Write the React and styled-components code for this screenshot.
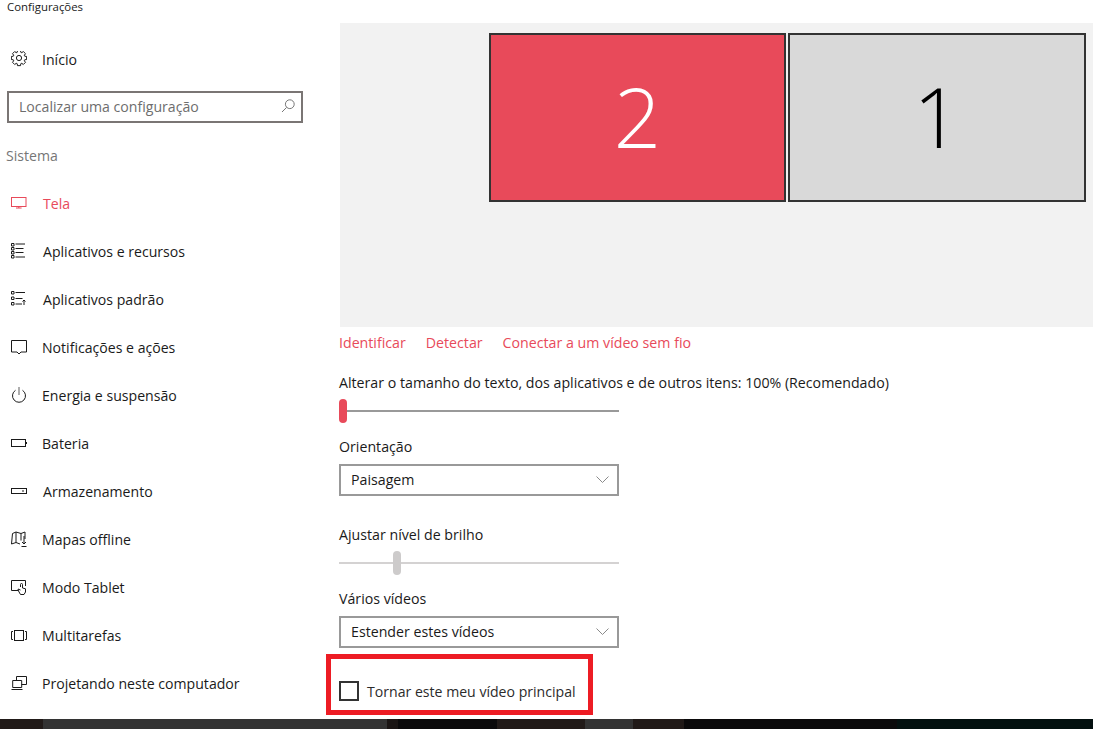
import React from "react";
import styled, { createGlobalStyle } from "styled-components";

const Global = createGlobalStyle`
  html, body { margin: 0; padding: 0; height: 100%; background: #fff; overflow: hidden; }
  #root { height: 100%; }
  * { box-sizing: border-box; }
`;

const Page = styled.div`
  position: relative;
  width: 1093px;
  height: 729px;
  display: flex;
  flex-direction: column;
  font-family: "Open Sans", "Liberation Sans", sans-serif;
  font-size: 14.2px;
  color: #1a1a1a;
  overflow: hidden;
`;
const Body = styled.div`
  flex: 1;
  min-height: 0;
  display: grid;
  grid-template-columns: 339px 1fr;
`;
const Sidebar = styled.aside`
  display: flex;
  flex-direction: column;
  font-size: 14.1px;
`;
const WinTitle = styled.div`
  font-size: 11.4px;
  line-height: 14px;
  padding-left: 7px;
  height: 35px;
`;
const NavRow = styled.div`
  height: 48px;
  display: flex;
  align-items: center;
  padding-left: 11px;
  gap: 15px;
  color: ${p => (p.$active ? "#e84a5a" : "#1a1a1a")};
  svg { flex: none; width: 16px; height: 16px; }
  span { transform: translateX(${p => p.$nudge || 0}px); }
`;
const Search = styled.div`
  margin: 8px 36px 0 7px;
  height: 32px;
  border: 2px solid #7a7574;
  display: flex;
  align-items: center;
  justify-content: space-between;
  padding: 0 5px 2px 10px;
  color: #6d6d6d;
`;
const Section = styled.div`
  padding-left: 6px;
  margin-top: 23px;
  height: 20px;
  line-height: 20px;
  color: #767676;
  margin-bottom: 13px;
`;
const Main = styled.main`
  display: flex;
  flex-direction: column;
  padding-top: 23px;
`;
const Preview = styled.div`
  margin-left: 1px;
  height: 304px;
  background: #f2f2f2;
  display: flex;
  gap: 2px;
  padding: 10px 0 0 149px;
  align-items: flex-start;
`;
const Monitor = styled.div`
  width: ${p => p.$w}px;
  height: 169px;
  padding-bottom: 4px;
  border: 2px solid #333;
  background: ${p => (p.$active ? "#e84a5a" : "#d9d9d9")};
  color: ${p => (p.$active ? "#fff" : "#000")};
  display: flex;
  align-items: center;
  justify-content: center;
  font-family: "Open Sans", "Lato", sans-serif;
  font-weight: 300;
  font-size: 83px;
  line-height: 1;
`;
const Links = styled.div`
  display: flex;
  gap: 20px;
  margin-top: 6px;
  height: 20px;
  line-height: 20px;
  color: #e84a5a;
`;
const Label = styled.div`
  height: 20px;
  line-height: 20px;
  margin-top: ${p => p.$top}px;
`;
const Slider = styled.div`
  position: relative;
  width: 280px;
  height: 24px;
  margin-top: ${p => p.$top || 0}px;
  display: flex;
  align-items: center;
  &::before {
    content: "";
    width: 100%;
    height: 2px;
    background: ${p => p.$track};
  }
`;
const Thumb = styled.div`
  position: absolute;
  left: ${p => p.$left}px;
  top: 0;
  width: 8px;
  height: 24px;
  border-radius: 4px;
  background: ${p => p.$color};
`;
const Select = styled.div`
  width: 280px;
  height: 32px;
  margin-top: ${p => p.$top || 0}px;
  padding: 0 8px 1px 10px;
  border: 2px solid #999;
  display: flex;
  align-items: center;
  justify-content: space-between;
`;
const CheckRow = styled.div`
  margin-top: 33px;
  display: flex;
  align-items: center;
  gap: 8px;
  height: 20px;
  font-size: 14.1px;
  color: #2b2b2b;
`;
const Box = styled.div`
  width: 20px;
  height: 20px;
  border: 2px solid #333;
`;
const Callout = styled.div`
  position: absolute;
  left: 326px;
  top: 654px;
  width: 267px;
  height: 61px;
  border: 5px solid #ed1c24;
`;
const Taskbar = styled.footer`
  flex: none;
  height: 10px;
  display: flex;
`;
const Slice = styled.div`
  width: ${p => p.$w}px;
  flex: ${p => (p.$w ? "none" : "1")};
  background: ${p => p.$c};
`;

const Ico = ({ children }) => (
  <svg viewBox="0 0 16 16" fill="none" stroke="currentColor" strokeWidth="1">{children}</svg>
);

const gearPath = (() => {
  const pts = [];
  const n = 8;
  for (let i = 0; i < n; i++) {
    const a = (i / n) * Math.PI * 2;
    const w = 0.2;
    const P = (r, t) => `${(8 + r * Math.cos(t)).toFixed(2)} ${(7 + r * Math.sin(t)).toFixed(2)}`;
    pts.push(`${i ? "L" : "M"}${P(6, a - w * 1.5)}`, `L${P(7.8, a - w)}`, `L${P(7.8, a + w)}`, `L${P(6, a + w * 1.5)}`);
  }
  return pts.join(" ") + " Z";
})();

const icons = {
  gear: <Ico><path d={gearPath} /><circle cx="8" cy="7" r="2.6" /></Ico>,
  display: <Ico><rect x="0.5" y="2.5" width="14.5" height="9" /><path d="M7.8 11.5v1.5M5 13h5.6" /></Ico>,
  list: (
    <Ico>
      <path d="M.5 .5h2.5v2.5H.5zM.5 4.5h2.5V7H.5zM.5 8.5h2.5V11H.5zM.5 12.5h2.5V15H.5z" />
      <path d="M4.5 1h9.5M4.5 5.5h8M4.5 9.5h8M4.5 14h9.5" />
    </Ico>
  ),
  listArrow: (
    <Ico>
      <path d="M.5 .5h2.5V3H.5zM.5 6h2.5v2.5H.5zM.5 11.5h2.5V14H.5z" />
      <path d="M4.5 1.5h9.5M4.5 7.5h7M4.5 13h6.5M13 14V9M11.5 10.5L13 9l1.5 1.5" />
    </Ico>
  ),
  message: <Ico><path d="M.5 1.5h15V13H10L8 15l-2-2H.5z" /></Ico>,
  power: <Ico><path d="M8 0v8" stroke="#777" strokeWidth="1.2" /><path d="M4.5 3.3a6.5 6.5 0 1 0 7 0" /></Ico>,
  battery: <Ico><rect x="0.5" y="4.5" width="14" height="7" /><path d="M15.5 7v2" /></Ico>,
  storage: <Ico><rect x="0.5" y="5.5" width="15" height="5" /><path d="M11 8h2" /></Ico>,
  map: (
    <Ico>
      <path d="M1.5 2.5L5 1l5 1.5L14 1v7M1.5 2.5L.5 13 5 11.5 9 13M5 1v10.5M10 2.5v7" />
      <path d="M13 5v8M11 11l2 2 2-2M10.5 15.5h5" />
    </Ico>
  ),
  tablet: (
    <Ico>
      <path d="M7 11.5H0.5v-10h14V7" />
      <path d="M9.5 8V5.5a1 1 0 0 1 2 0V9l3 .8V13l-1.5 2.5H9.5L7.5 12l-.5-2 2.5 1" />
    </Ico>
  ),
  multi: <Ico><rect x="3.5" y="3.5" width="9" height="10" /><path d="M2 4.5H.5v8H2M14 4.5h1.5v8H14" /></Ico>,
  project: (
    <Ico>
      <path d="M5.5 5V1.5h10v8h-5" />
      <path d="M1.7 5.5h9v7h-9zM.5 14.5h11" />
    </Ico>
  ),
};

const Chevron = () => (
  <svg width="13" height="7" viewBox="0 0 13 7" fill="none" stroke="#8a8a8a" strokeWidth="1">
    <path d="M.5 .5l6 6 6-6" />
  </svg>
);

const nav = [
  ["display", "Tela", 1, true],
  ["list", "Aplicativos e recursos", 1],
  ["listArrow", "Aplicativos padrão", 1],
  ["message", "Notificações e ações", 0],
  ["power", "Energia e suspensão", 0],
  ["battery", "Bateria", 0],
  ["storage", "Armazenamento", 1],
  ["map", "Mapas offline", 0],
  ["tablet", "Modo Tablet", 0],
  ["multi", "Multitarefas", 0],
  ["project", "Projetando neste computador", 0],
];

const slices = [
  [43, "#211a18"], [344, "#333333"], [11, "#1a1514"], [99, "#0b0a0b"], [88, "#211a18"],
  [48, "#333333"], [51, "#211a18"], [213, "#0b0a0b"], [0, "#03100f"],
];

export default function App() {
  return (
    <Page>
      <Global />
      <Body>
        <Sidebar>
          <WinTitle>Configurações</WinTitle>
          <NavRow>{icons.gear}<span>Início</span></NavRow>
          <Search>
            <span>Localizar uma configuração</span>
            <svg width="16" height="16" viewBox="0 0 16 16" fill="none" stroke="#777" strokeWidth="1">
              <circle cx="9.8" cy="6.2" r="4.4" /><path d="M6.6 9.4L2 14" />
            </svg>
          </Search>
          <Section>Sistema</Section>
          {nav.map(([ic, text, nudge, active]) => (
            <NavRow key={text} $active={active} $nudge={nudge}>{icons[ic]}<span>{text}</span></NavRow>
          ))}
        </Sidebar>
        <Main>
          <Preview>
            <Monitor $w={297} $active>2</Monitor>
            <Monitor $w={298}>1</Monitor>
          </Preview>
          <Links>
            <span>Identificar</span>
            <span>Detectar</span>
            <span>Conectar a um vídeo sem fio</span>
          </Links>
          <Label $top={20}>Alterar o tamanho do texto, dos aplicativos e de outros itens: 100% (Recomendado)</Label>
          <Slider $top={6} $track="#999"><Thumb $left={0} $color="#e84a5a" /></Slider>
          <Label $top={14}>Orientação</Label>
          <Select $top={7}>Paisagem<Chevron /></Select>
          <Label $top={29}>Ajustar nível de brilho</Label>
          <Slider $top={6} $track="#d4d2d2"><Thumb $left={54} $color="#cdcbcb" /></Slider>
          <Label $top={14}>Vários vídeos</Label>
          <Select $top={7}>Estender estes vídeos<Chevron /></Select>
          <CheckRow><Box />Tornar este meu vídeo principal</CheckRow>
        </Main>
      </Body>
      <Taskbar>
        {slices.map(([w, c], i) => <Slice key={i} $w={w} $c={c} />)}
      </Taskbar>
      <Callout />
    </Page>
  );
}
